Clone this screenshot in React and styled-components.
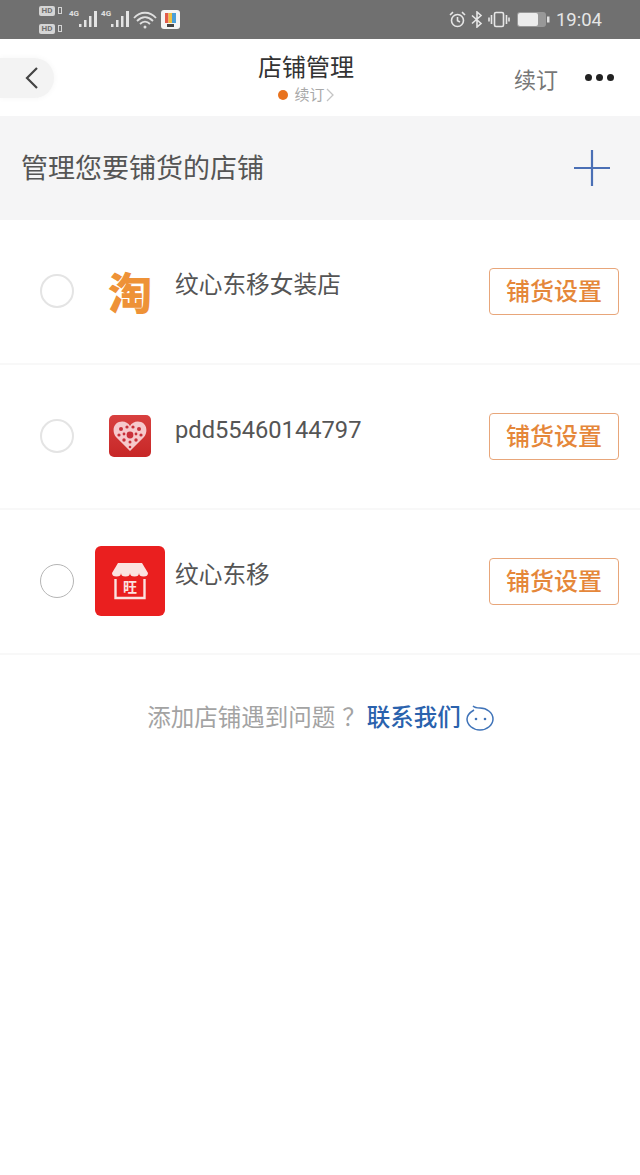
import React from "react";
import styled, { createGlobalStyle } from "styled-components";

const FONT = `"Roboto", "Noto Sans CJK SC", sans-serif`;

const GlobalStyle = createGlobalStyle`
  html, body {
    margin: 0;
    padding: 0;
    background: #fff;
    font-family: ${FONT};
  }
  * {
    box-sizing: border-box;
  }
`;

const Page = styled.div`
  width: 640px;
  min-height: 1175px;
  background: #fff;
  overflow: hidden;
`;

const StatusBar = styled.div`
  height: 39px;
  background: #707070;
  display: flex;
  align-items: center;
  justify-content: space-between;
  padding: 0 38px 0 39px;
  color: #e8e8e8;
`;

const StatusGroup = styled.div`
  display: flex;
  align-items: center;
  gap: ${props => props.gap || 4}px;
`;

const HdStack = styled.div`
  display: flex;
  flex-direction: column;
  gap: 8px;
  margin-right: 3px;
`;

const HdLine = styled.div`
  display: flex;
  align-items: center;
  gap: 3px;
`;

const HdBadge = styled.span`
  width: 16px;
  height: 10px;
  background: #d5d5d5;
  color: #707070;
  border-radius: 2px;
  font-size: 8px;
  font-weight: 700;
  line-height: 10px;
  text-align: center;
`;

const HdTick = styled.span`
  width: 4px;
  height: 7px;
  border: 1px solid #d5d5d5;
`;

const SignalWrap = styled.div`
  display: flex;
  align-items: flex-start;
  height: 22px;
`;

const SignalLabel = styled.span`
  font-size: 8px;
  font-weight: 700;
  line-height: 10px;
  color: #e0e0e0;
`;

const AppBadge = styled.div`
  width: 19px;
  height: 19px;
  background: #f4f4f4;
  border-radius: 3px;
  display: flex;
  align-items: center;
  justify-content: center;
`;

const Clock = styled.span`
  font-size: 18.5px;
  color: #e6e6e6;
  margin-left: 1px;
`;

const NavBar = styled.div`
  height: 77px;
  display: grid;
  grid-template-columns: 1fr auto 1fr;
  align-items: center;
  background: #fff;
`;

const BackPill = styled.div`
  width: 54px;
  height: 40px;
  margin-top: 1px;
  background: #f3f3f3;
  border-radius: 0 20px 20px 0;
  display: flex;
  align-items: center;
  justify-content: flex-end;
  padding-right: 15px;
  box-shadow: 0 0 6px #f5f5f5;
`;

const TitleBlock = styled.div`
  display: flex;
  flex-direction: column;
  align-items: center;
  margin-right: 28px;
  padding-top: 3px;
`;

const Title = styled.div`
  font-size: 24px;
  line-height: 30px;
  color: #333;
  margin-top: -1px;
`;

const SubTitle = styled.div`
  display: flex;
  align-items: center;
  gap: 6px;
  font-size: 15px;
  line-height: 20px;
  color: #a9a9a9;
  margin-top: 2px;
`;

const OrangeDot = styled.span`
  width: 10px;
  height: 10px;
  border-radius: 50%;
  background: #e8721e;
`;

const NavActions = styled.div`
  display: flex;
  justify-content: flex-end;
  align-items: center;
  gap: 27px;
  padding-right: 26px;
`;

const RenewLink = styled.span`
  font-size: 22px;
  color: #777;
`;

const Dots = styled.div`
  display: flex;
  gap: 4px;
`;

const Dot = styled.span`
  width: 7px;
  height: 7px;
  border-radius: 50%;
  background: #222;
`;

const SectionHeader = styled.div`
  height: 104px;
  background: #f5f5f6;
  display: flex;
  align-items: center;
  justify-content: space-between;
  padding: 0 29px 0 21px;
`;

const SectionTitle = styled.div`
  font-size: 27px;
  color: #555;
  margin-top: -3px;
`;

const ShopRow = styled.div`
  height: 145px;
  display: flex;
  align-items: center;
  padding: 0 21px 2px 40px;
  border-bottom: 2px solid #f8f8f8;
`;

const Radio = styled.div`
  width: 34px;
  height: 34px;
  border-radius: 50%;
  border: ${props => (props.dark ? "1.5px solid #b5b5b5" : "2px solid #e4e4e4")};
  flex: none;
`;

const LogoSlot = styled.div`
  width: 70px;
  height: 70px;
  margin: 0 10px 0 21px;
  flex: none;
  display: flex;
  align-items: center;
  justify-content: center;
`;

const TaobaoLogo = styled.span`
  font-family: "Noto Sans CJK SC", sans-serif;
  font-size: 44px;
  font-weight: 900;
  line-height: 1;
  color: #ee9237;
`;

const PddLogo = styled.div`
  width: 42px;
  height: 42px;
  border-radius: 5px;
  background: linear-gradient(#d8403f, #c72727);
  display: flex;
  align-items: center;
  justify-content: center;
`;

const WangLogo = styled.div`
  width: 70px;
  height: 70px;
  border-radius: 6px;
  background: #ea1f1f;
  display: flex;
  align-items: center;
  justify-content: center;
  position: relative;
`;

const WangText = styled.span`
  position: absolute;
  left: 0;
  right: 0;
  top: 33px;
  text-align: center;
  font-size: 14px;
  font-weight: 700;
  line-height: 16px;
  color: #fbe3e0;
`;

const ShopName = styled.div`
  flex: 1;
  font-size: 23.7px;
  line-height: 30px;
  color: #555;
  margin-top: -12px;
`;

const SetupButton = styled.button`
  width: 130px;
  height: 47px;
  flex: none;
  margin-top: 2px;
  padding: 0 0 5px;
  background: #fff;
  border: 1.5px solid #e8a67a;
  border-radius: 4px;
  color: #e5873a;
  font-family: ${FONT};
  font-size: 24px;
  font-weight: 500;
`;

const HelpLine = styled.div`
  display: flex;
  align-items: center;
  justify-content: center;
  margin-top: 47px;
  padding-left: 1px;
  font-size: 23.5px;
  line-height: 32px;
`;

const HelpText = styled.span`
  color: #a3a3a3;
`;

const HelpMark = styled.span`
  color: #a3a3a3;
  margin-left: 7px;
`;

const HelpLink = styled.span`
  color: #2a62ad;
  margin-left: 1px;
  font-weight: 500;
`;

const Smiley = styled.svg`
  margin-left: 5px;
`;

const SignalBars = () => (
  <svg width="18" height="20" viewBox="0 0 18 20">
    <g fill="#e4e4e4">
      <rect x="0" y="15" width="2.5" height="3" />
      <rect x="5" y="11" width="2.5" height="7" />
      <rect x="10" y="7" width="2.5" height="11" />
      <rect x="15" y="2" width="3" height="16" />
    </g>
  </svg>
);

const shops = [
  { id: "taobao", name: "纹心东移女装店" },
  { id: "pdd", name: "pdd55460144797" },
  { id: "wang", name: "纹心东移", darkRadio: true }
];

const renderLogo = id => {
  if (id === "taobao") return <TaobaoLogo>淘</TaobaoLogo>;
  if (id === "pdd") {
    return (
      <PddLogo>
        <svg width="34" height="32" viewBox="0 0 34 32">
          <path
            d="M17 31 L3 17 C-1 12 0 4 6 2 C10 0.5 15 2 17 6 C19 2 24 0.5 28 2 C34 4 35 12 31 17 Z"
            fill="#f6c9cc"
          />
          <g fill="#c9303a">
            <circle cx="8" cy="9" r="2" />
            <circle cx="14" cy="7" r="1.6" />
            <circle cx="20" cy="7" r="1.6" />
            <circle cx="26" cy="9" r="2" />
            <circle cx="6" cy="15" r="1.6" />
            <circle cx="28" cy="15" r="1.6" />
            <circle cx="17" cy="15" r="3.4" />
            <circle cx="11" cy="14" r="1.4" />
            <circle cx="23" cy="14" r="1.4" />
            <circle cx="11" cy="20" r="1.7" />
            <circle cx="23" cy="20" r="1.7" />
            <circle cx="17" cy="22" r="1.5" />
            <circle cx="17" cy="27" r="1.3" />
          </g>
        </svg>
      </PddLogo>
    );
  }
  return (
    <WangLogo>
      <svg width="38" height="38" viewBox="0 0 38 38">
        <path d="M7 1 H31 L37 11 H1 Z" fill="#fbe3e0" />
        <path
          d="M1 11 a4.5 3.5 0 0 0 9 0 a4.5 3.5 0 0 0 9 0 a4.5 3.5 0 0 0 9 0 a4.5 3.5 0 0 0 9 0 Z"
          fill="#fbe3e0"
        />
        <path
          d="M4.5 17 V36 H33.5 V17"
          fill="none"
          stroke="#fbe3e0"
          strokeWidth="2.4"
        />
      </svg>
      <WangText>旺</WangText>
    </WangLogo>
  );
};

export default function App() {
  return (
    <Page>
      <GlobalStyle />
      <StatusBar>
        <StatusGroup gap={4}>
          <HdStack>
            <HdLine>
              <HdBadge>HD</HdBadge>
              <HdTick />
            </HdLine>
            <HdLine>
              <HdBadge>HD</HdBadge>
              <HdTick />
            </HdLine>
          </HdStack>
          <SignalWrap>
            <SignalLabel>4G</SignalLabel>
            <SignalBars />
          </SignalWrap>
          <SignalWrap>
            <SignalLabel>4G</SignalLabel>
            <SignalBars />
          </SignalWrap>
          <svg width="24" height="18" viewBox="0 0 24 18">
            <g fill="none" stroke="#e0e0e0" strokeWidth="1.8">
              <path d="M1 7 C7 0 17 0 23 7" />
              <path d="M4 10 C9 5 15 5 20 10" />
              <path d="M7 13 C10 10 14 10 17 13" />
            </g>
            <circle cx="12" cy="16" r="1.5" fill="#e0e0e0" />
          </svg>
          <AppBadge>
            <svg width="11" height="14" viewBox="0 0 11 14">
              <rect x="0" y="0" width="3.5" height="10" fill="#e25b4b" />
              <rect x="3.5" y="0" width="3.5" height="10" fill="#f0c040" />
              <rect x="7" y="0" width="4" height="10" fill="#4a9fd8" />
              <rect x="2" y="11" width="7" height="3" fill="#444" />
            </svg>
          </AppBadge>
        </StatusGroup>
        <StatusGroup gap={5}>
          <svg width="17" height="17" viewBox="0 0 17 17">
            <g fill="none" stroke="#e6e6e6" strokeWidth="1.6">
              <circle cx="8.5" cy="9.5" r="6" />
              <path d="M8.5 6 V9.8 L11 11" />
              <path d="M1 4 L4 1.2 M16 4 L13 1.2" />
            </g>
          </svg>
          <svg width="12" height="17" viewBox="0 0 12 17">
            <path
              d="M1 4.5 L10 12.5 L6 16 V1 L10 4.5 L1 12.5"
              fill="none"
              stroke="#e6e6e6"
              strokeWidth="1.6"
            />
          </svg>
          <svg width="22" height="17" viewBox="0 0 22 17">
            <rect
              x="6.5"
              y="1.5"
              width="9"
              height="14"
              rx="1.5"
              fill="none"
              stroke="#e6e6e6"
              strokeWidth="1.6"
            />
            <path
              d="M3.5 4 V13 M1 6.5 V10.5 M18.5 4 V13 M21 6.5 V10.5"
              stroke="#e6e6e6"
              strokeWidth="1.6"
            />
          </svg>
          <svg width="33" height="15" viewBox="0 0 33 15" style={{ marginLeft: 2 }}>
            <rect x="0" y="0" width="29" height="15" rx="3" fill="#989898" />
            <rect x="1" y="1" width="20" height="13" rx="2" fill="#ececec" />
            <rect x="30" y="4.5" width="2.5" height="6" fill="#e0e0e0" />
          </svg>
          <Clock>19:04</Clock>
        </StatusGroup>
      </StatusBar>

      <NavBar>
        <BackPill>
          <svg width="14" height="24" viewBox="0 0 14 24">
            <path
              d="M12 2 L2 12 L12 22"
              fill="none"
              stroke="#444"
              strokeWidth="2.2"
            />
          </svg>
        </BackPill>
        <TitleBlock>
          <Title>店铺管理</Title>
          <SubTitle>
            <OrangeDot />
            <span>续订</span>
            <svg
              width="8"
              height="14"
              viewBox="0 0 8 14"
              style={{ marginLeft: -5 }}
            >
              <path
                d="M1 1 L7 7 L1 13"
                fill="none"
                stroke="#c4c4c4"
                strokeWidth="1.3"
              />
            </svg>
          </SubTitle>
        </TitleBlock>
        <NavActions>
          <RenewLink>续订</RenewLink>
          <Dots>
            <Dot />
            <Dot />
            <Dot />
          </Dots>
        </NavActions>
      </NavBar>

      <SectionHeader>
        <SectionTitle>管理您要铺货的店铺</SectionTitle>
        <svg width="38" height="38" viewBox="0 0 38 38">
          <path
            d="M19 1 V37 M1 19 H37"
            stroke="#4a6fb5"
            strokeWidth="2.2"
            fill="none"
          />
        </svg>
      </SectionHeader>

      {shops.map(shop => (
        <ShopRow key={shop.id}>
          <Radio dark={shop.darkRadio} />
          <LogoSlot>{renderLogo(shop.id)}</LogoSlot>
          <ShopName>{shop.name}</ShopName>
          <SetupButton>铺货设置</SetupButton>
        </ShopRow>
      ))}

      <HelpLine>
        <HelpText>添加店铺遇到问题</HelpText>
        <HelpMark>？</HelpMark>
        <HelpLink>联系我们</HelpLink>
        <Smiley width="28" height="26" viewBox="0 0 28 26">
          <path
            d="M8 5 C3 8 1 11 1 14 C1 20 7 25 14 25 C21 25 27 20 27 14 C27 8 21 3 14 3 C11 3 9 3 7 1"
            fill="none"
            stroke="#3f73b8"
            strokeWidth="1.5"
          />
          <circle cx="10" cy="14" r="1.3" fill="#3f73b8" />
          <circle cx="19" cy="14" r="1.3" fill="#3f73b8" />
        </Smiley>
      </HelpLine>
    </Page>
  );
}
